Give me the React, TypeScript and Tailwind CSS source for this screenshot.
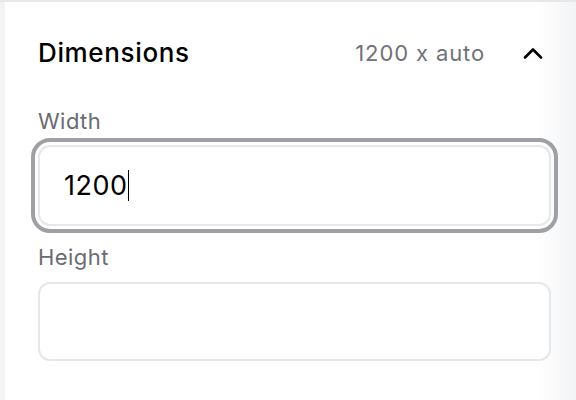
import React from 'react';

export default function App() {
  return (
    <div className="w-[576px] h-[400px] bg-[#f3f4f6] overflow-hidden" style={{ fontFamily: 'Inter, "Noto Sans", sans-serif' }}>
      <div className="h-[2px] bg-[#e5e7eb]" />
      <div className="ml-[5px] h-[398px] bg-[linear-gradient(to_right,#ffffff_93%,#f3f4f6)] pl-[33px] pr-[26px] pt-[35px]">
        {/* Header */}
        <div className="flex items-center h-[32px]">
          <span className="text-[26px] leading-[32px] font-medium text-black tracking-[0.025em]">Dimensions</span>
          <span className="ml-auto text-[22px] leading-[32px] text-[#71717a] tracking-[0.04em]">1200 x auto</span>
          <svg className="ml-[38px] mr-[7px]" width="20" height="12" viewBox="0 0 20 12" fill="none">
            <path d="M2 10.5 L10 2.5 L18 10.5" stroke="#000" strokeWidth="2.6" strokeLinecap="round" strokeLinejoin="round" />
          </svg>
        </div>

        {/* Width */}
        <div className="mt-[38px] text-[22px] leading-[28px] text-[#6b6b73] tracking-[0.02em]">Width</div>
        <div className="mt-[10px] w-[513px] h-[81px] rounded-[12px] border-2 border-[#e5e7eb] bg-white outline-[4px] outline-solid outline-offset-[3px] outline-[#9fa0a6] flex items-center pl-[24px]">
          <span className="text-[27px] leading-[32px] text-black tracking-[0.02em]">1200</span>
          <span className="w-[1.5px] h-[31px] bg-black" />
        </div>

        {/* Height */}
        <div className="mt-[17px] text-[22px] leading-[28px] text-[#6b6b73] tracking-[0.02em]">Height</div>
        <div className="mt-[11px] w-[513px] h-[79px] rounded-[12px] border-2 border-[#e5e7eb] bg-white" />
      </div>
    </div>
  );
}
